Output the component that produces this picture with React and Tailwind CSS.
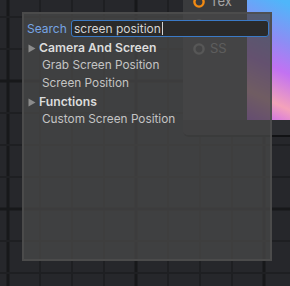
const COLS = Array.from({ length: 10 }, (_, i) => 8 + i * 32)
const ROWS = Array.from({ length: 10 }, (_, i) => -15 + i * 32)

const RESULTS = [
  { type: 'group', label: 'Camera And Screen' },
  { type: 'item', label: 'Grab Screen Position' },
  { type: 'item', label: 'Screen Position' },
  { type: 'group', label: 'Functions' },
  { type: 'item', label: 'Custom Screen Position' },
]

function Grid() {
  return (
    <svg className="absolute inset-0" width="290" height="286">
      <rect width="290" height="286" fill="#26272b" />
      {COLS.map(x => {
        const major = (x - 8) % 128 === 0
        return <rect key={'c' + x} x={major ? x - 1.5 : x - 1} y="0" width={major ? 3 : 2} height="286" fill={major ? '#17181a' : '#1e1f22'} />
      })}
      {ROWS.map(y => {
        const major = (y - 81) % 128 === 0
        return <rect key={'r' + y} x="0" y={major ? y - 1.5 : y - 1} width="290" height={major ? 3 : 2} fill={major ? '#17181a' : '#1e1f22'} />
      })}
    </svg>
  )
}

function Port({ color, label }) {
  return (
    <div className="h-[23.5px] flex items-center">
      <svg width="14" height="14" className="ml-[9px] shrink-0">
        <circle cx="7" cy="7" r="4.6" fill="none" stroke={color} strokeWidth="2.4" />
      </svg>
      {label && <span className="ml-[4px] text-[13px] text-[#a4a4a4]">{label}</span>}
    </div>
  )
}

function Node() {
  return (
    <div className="absolute left-[183px] top-[-10px] w-[120px] flex flex-col rounded-bl-md overflow-hidden border-b-2 border-[#111214]">
      <div className="flex h-[130px]">
        <div className="w-[64px] bg-[#3a3b3d] flex flex-col">
          <Port color="#f28a12" label="Tex" />
          <Port color="#8a8a8a" />
          <Port color="#8a8a8a" label="SS" />
        </div>
        <svg width="56" height="130" className="shrink-0">
          <defs>
            <linearGradient id="prev" x1="0.2" y1="0" x2="0" y2="1">
              <stop offset="0" stopColor="#4fb6fa" />
              <stop offset="0.3" stopColor="#8e8cf4" />
              <stop offset="0.52" stopColor="#c272f2" />
              <stop offset="0.78" stopColor="#f4a2ba" />
              <stop offset="1" stopColor="#c45ef8" />
            </linearGradient>
          </defs>
          <rect width="56" height="130" fill="url(#prev)" />
        </svg>
      </div>
      <div className="h-[15px] bg-[#2d2e32]" />
    </div>
  )
}

function Triangle() {
  return (
    <svg width="8" height="9" className="ml-[4px] mr-[3px] shrink-0">
      <path d="M0.5 0.5 L7.5 4.5 L0.5 8.5 Z" fill="#8c8c8c" />
    </svg>
  )
}

function SearchPopup() {
  return (
    <div className="absolute left-[22px] top-[12px] w-[250px] h-[249px] border-2 border-[#4d4d4d]/[0.85] bg-[#474747]/[0.77] flex flex-col pt-[6px]">
      <div className="flex items-center h-[17px]">
        <span className="ml-[3px] w-[44px] text-[12px] text-[#76a4e4]">Search</span>
        <div className="w-[198px] h-[17px] rounded-[3px] border border-[#3b7ac6] bg-[#2a2a2a] flex items-center pl-[2px]">
          <span className="text-[12px] text-[#d4d4d4] leading-none">screen position</span>
          <span className="w-px h-[13px] bg-[#d4d4d4] ml-px" />
        </div>
      </div>
      <div className="mt-[2px] flex flex-col">
        {RESULTS.map(r =>
          r.type === 'group' ? (
            <div key={r.label} className="h-[18px] flex items-center">
              <Triangle />
              <span className="text-[12.2px] font-semibold text-[#dcdcdc]">{r.label}</span>
            </div>
          ) : (
            <div key={r.label} className="h-[18px] flex items-center pl-[18px]">
              <span className="text-[11.8px] text-[#c4c4c4]">{r.label}</span>
            </div>
          )
        )}
      </div>
    </div>
  )
}

export default function App() {
  return (
    <div className="relative w-[290px] h-[286px] overflow-hidden bg-[#26272b] font-[Inter,sans-serif]">
      <Grid />
      <Node />
      <SearchPopup />
    </div>
  )
}
